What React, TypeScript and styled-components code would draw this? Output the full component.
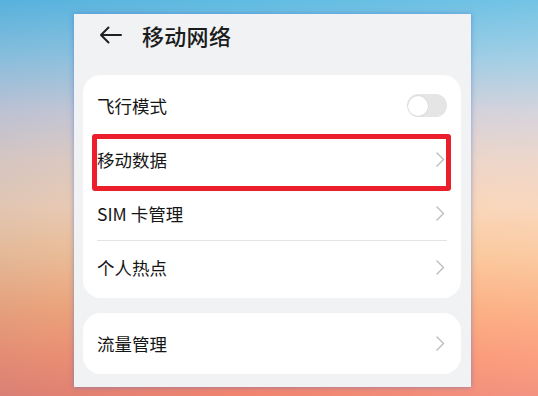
import React from "react";
import styled, { createGlobalStyle } from "styled-components";

const Global = createGlobalStyle`
  html, body { margin: 0; padding: 0; }
  body {
    width: 538px;
    height: 396px;
    overflow: hidden;
    font-family: "Noto Sans CJK SC", "Noto Sans", sans-serif;
  }
`;

const Backdrop = styled.div`
  width: 538px;
  height: 396px;
  box-sizing: border-box;
  padding: 14px 0 0 74px;
  background:
    linear-gradient(to right, rgba(20, 90, 170, 0.1), rgba(255, 255, 255, 0) 45%, rgba(255, 255, 255, 0.12)),
    linear-gradient(
      to bottom,
      #5fbbe2 0%,
      #93c8e2 14%,
      #cfcdd8 28%,
      #ead1c4 40%,
      #f8d2b4 52%,
      #fbc496 64%,
      #fca878 78%,
      #fb926e 90%,
      #f1846f 100%
    );
`;

const Phone = styled.div`
  width: 397px;
  height: 373px;
  background: #f1f2f4;
  box-shadow: 0 0 5px rgba(70, 110, 200, 0.55);
  display: flex;
  flex-direction: column;
  padding: 0 10px 0 9px;
  box-sizing: border-box;
`;

const Header = styled.div`
  height: 42px;
  display: flex;
  align-items: center;
  padding-left: 16px;
  gap: 20px;
  margin-bottom: 19px;
`;

const Title = styled.div`
  font-size: 22px;
  color: #1b1b1b;
  font-weight: 500;
  letter-spacing: 0.3px;
  line-height: 1;
`;

const Card = styled.div<{ $mt?: number }>`
  position: relative;
  background: #ffffff;
  border-radius: 18px;
  padding: 4px 14px 3px;
  margin-top: ${(p) => p.$mt ?? 0}px;
  display: flex;
  flex-direction: column;
`;

const Row = styled.div<{ $divider?: boolean }>`
  height: 54px;
  display: flex;
  align-items: center;
  justify-content: space-between;
  box-sizing: border-box;
  border-bottom: ${(p) => (p.$divider ? "1px solid #e4e4e6" : "1px solid transparent")};
`;

const Label = styled.span`
  font-size: 17.5px;
  font-weight: 400;
  color: #161616;
  line-height: 1;
`;

const Toggle = styled.div`
  width: 40px;
  height: 23px;
  border-radius: 12px;
  background: #e5e5e5;
  box-sizing: border-box;
  padding: 1px;
  display: flex;
  align-items: center;
`;

const Knob = styled.div`
  width: 20px;
  height: 20px;
  border-radius: 50%;
  background: #ffffff;
  box-shadow: 0 0 0 0.5px rgba(0, 0, 0, 0.08);
`;

const ChevronWrap = styled.span`
  display: flex;
  align-items: center;
  margin-right: 2px;
`;

const Highlight = styled.div`
  position: absolute;
  left: 9px;
  top: 59px;
  width: 359px;
  height: 57px;
  box-sizing: border-box;
  border: 5px solid #ea1f2b;
  border-radius: 3px;
  pointer-events: none;
`;

const Chevron = () => (
  <ChevronWrap>
    <svg width="9" height="15" viewBox="0 0 9 15">
      <path d="M1 1 L7.5 7.5 L1 14" fill="none" stroke="#bcbcbc" strokeWidth="1.4" strokeLinecap="round" strokeLinejoin="round" />
    </svg>
  </ChevronWrap>
);

const BackArrow = () => (
  <svg width="23" height="18" viewBox="0 0 23 18">
    <path d="M22 9 H2 M9.5 1.5 L2 9 L9.5 16.5" fill="none" stroke="#202020" strokeWidth="2" strokeLinecap="round" strokeLinejoin="round" />
  </svg>
);

export default function App() {
  return (
    <>
      <Global />
      <Backdrop>
        <Phone>
          <Header>
            <BackArrow />
            <Title>移动网络</Title>
          </Header>
          <Card>
            <Row>
              <Label>飞行模式</Label>
              <Toggle>
                <Knob />
              </Toggle>
            </Row>
            <Row>
              <Label>移动数据</Label>
              <Chevron />
            </Row>
            <Row $divider>
              <Label>SIM 卡管理</Label>
              <Chevron />
            </Row>
            <Row>
              <Label>个人热点</Label>
              <Chevron />
            </Row>
            <Highlight />
          </Card>
          <Card $mt={15}>
            <Row>
              <Label>流量管理</Label>
              <Chevron />
            </Row>
          </Card>
        </Phone>
      </Backdrop>
    </>
  );
}
